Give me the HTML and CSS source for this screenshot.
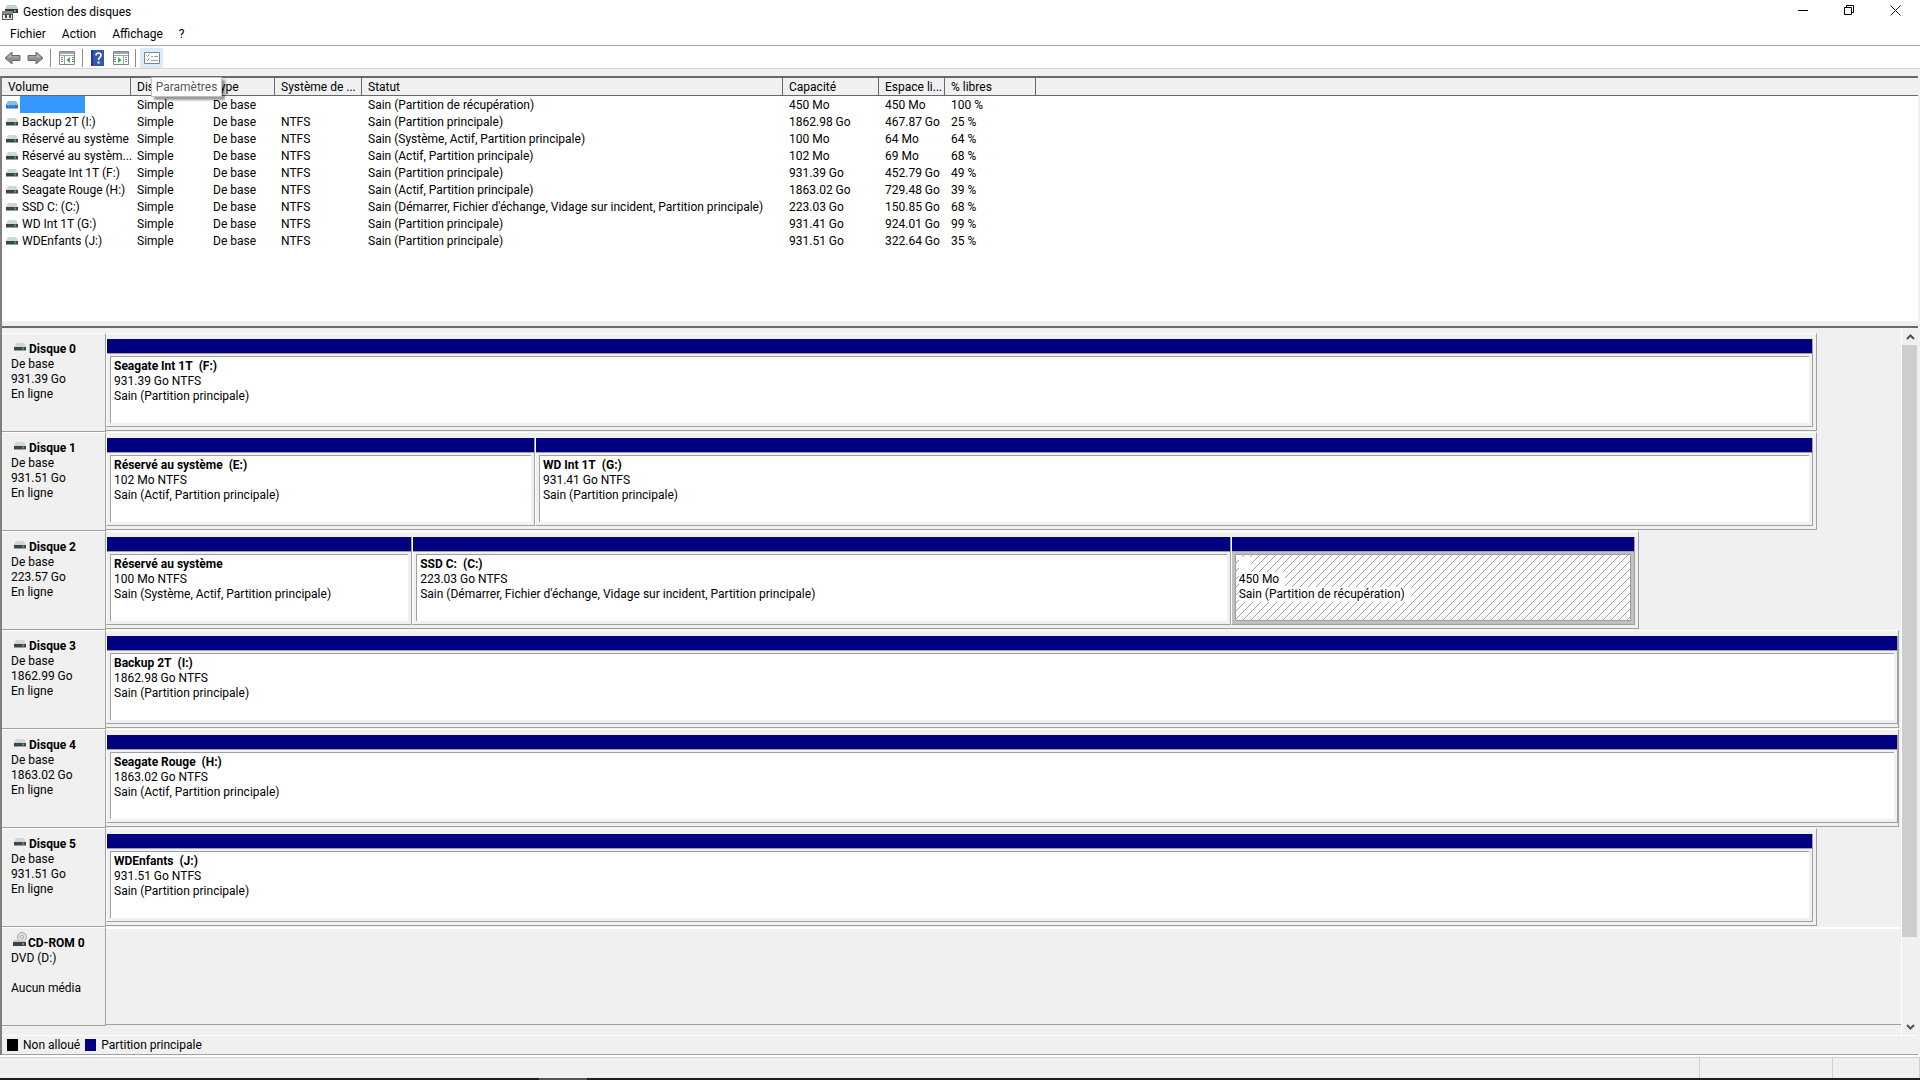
FILE: index.html
```html
<!DOCTYPE html>
<html lang="fr">
<head>
<meta charset="utf-8">
<title>Gestion des disques</title>
<meta name="viewport" content="width=device-width, initial-scale=1">
<link rel="stylesheet" href="styles.css">
</head>
<body>
<svg class="defs" aria-hidden="true">
  <symbol id="drive" viewBox="0 0 13 8" preserveAspectRatio="none">
    <path d="M2 0h9l2 4H0z" fill="#d3d6d9"/>
    <path d="M0 4h13v3H0z" fill="#3d4348"/>
    <path d="M0 7h13v1H0z" fill="#9da0a2"/>
    <path d="M9 4.500h2v2H9z" fill="#35c43a"/>
  </symbol>
  <symbol id="drive-selected" viewBox="0 0 13 8" preserveAspectRatio="none">
    <path d="M2 0h9l2 4H0z" fill="#82bdea"/>
    <path d="M0 4h13v3H0z" fill="#2d75b3"/>
    <path d="M0 7h13v1H0z" fill="#82bdea"/>
    <path d="M2 4h1v2H2zM5 4h1v2H5zM8 4h1v2H8z" fill="#62a5dc"/>
  </symbol>
  <symbol id="arrow-left" viewBox="0 0 17 14">
    <path d="M1 7l7-6v3.500h8v5H8V13z" fill="#8d8d8d" stroke="#6a6a6a"/>
    <path d="M3 6.500l4-3.500v2.500h8v1z" fill="#b4b4b4"/>
  </symbol>
</svg>

<div class="window">
  <header class="titlebar">
    <svg class="app-icon" viewBox="0 0 16 15" aria-hidden="true">
      <path d="M5 0h9l2 4H3z" fill="#c9cccf"/><path d="M3 4h13v4H3z" fill="#33383c"/><path d="M12 5h2v2h-2z" fill="#3ec645"/>
      <path d="M0 6h11v3H0z" fill="#85898c"/><path d="M0 9h11v6H0z" fill="#53575a"/><path d="M1 10h9v4H1z" fill="#e9eaeb"/><path d="M3 10h2v3H3zM7 10h2v3H7z" fill="#44484b"/>
    </svg>
    <h1 class="title">Gestion des disques</h1>
    <div class="window-buttons">
      <button class="window-button" type="button" aria-label="Réduire"><svg viewBox="0 0 11 11"><path d="M0 5.500h10" stroke="#000"/></svg></button>
      <button class="window-button" type="button" aria-label="Restaurer"><svg viewBox="0 0 11 11"><path d="M.5 2.500h7v7h-7zM2.500 2.500v-2h7v7h-2" fill="none" stroke="#000"/></svg></button>
      <button class="window-button" type="button" aria-label="Fermer"><svg viewBox="0 0 11 11"><path d="M.5.5l10 10M10.500.5l-10 10" stroke="#222"/></svg></button>
    </div>
  </header>

  <nav class="menubar">
    <button class="menu" type="button">Fichier</button>
    <button class="menu" type="button">Action</button>
    <button class="menu" type="button">Affichage</button>
    <button class="menu" type="button">?</button>
  </nav>

  <div class="toolbar">
    <button class="tool" type="button" aria-label="Précédent"><svg class="arrow" viewBox="0 0 17 14"><use href="#arrow-left"/></svg></button>
    <button class="tool" type="button" aria-label="Suivant"><svg class="arrow forward" viewBox="0 0 17 14"><use href="#arrow-left"/></svg></button>
    <span class="divider"></span>
    <button class="tool wide" type="button" aria-label="Arborescence"><svg class="panel" viewBox="0 0 16 14">
      <path d="M.5.5h15v13H.5z" fill="#fff" stroke="#7f868c"/><path d="M1 1h14v2H1z" fill="#9fa8b0"/><path d="M1 4.500h14M5.500 4v9" stroke="#9aa1a7"/>
      <path d="M2 6.500h2M2 8.500h2M2 10.500h2M13 6.500h2M13 8.500h2M13 10.500h2" stroke="#6d87a6"/><path d="M11 6v6L7.500 9z" fill="#3eae3f"/></svg></button>
    <span class="divider"></span>
    <button class="tool" type="button" aria-label="Aide"><svg class="help" viewBox="0 0 13 16">
      <path d="M0 0h13v16H0z" fill="#3553b8"/><path d="M0 0h2v16H0z" fill="#22398f"/><path d="M5 5.500C5 2 10 2.300 10 5.200 10 7.400 7.500 7.400 7.500 10" fill="none" stroke="#fff" stroke-width="1.600"/><path d="M6.600 11.500h2v2h-2z" fill="#fff"/></svg></button>
    <button class="tool" type="button" aria-label="Volet Actions"><svg class="panel" viewBox="0 0 16 14">
      <path d="M.5.5h15v13H.5z" fill="#fff" stroke="#7f868c"/><path d="M1 1h14v2H1z" fill="#9fa8b0"/><path d="M1 4.500h14M10.500 4v9" stroke="#9aa1a7"/>
      <path d="M12 6.500h2M12 8.500h2M12 10.500h2M1 6.500h2M1 8.500h2M1 10.500h2" stroke="#6d87a6"/><path d="M5 6v6l3.500-3z" fill="#3eae3f"/></svg></button>
    <span class="divider"></span>
    <button class="tool active" type="button" aria-label="Paramètres" aria-describedby="tip"><svg class="panel" viewBox="0 0 16 14">
      <path d="M.5 1.500h15v11H.5z" fill="#fff" stroke="#7f868c"/><path d="M2.500 4.500l1 1 2-2M2.500 8.500l1 1 2-2" fill="none" stroke="#4f8fce"/><path d="M7 5.500h2M10 5.500h4M7 9.500h7" stroke="#9aa1a7"/></svg></button>
    <span class="tooltip" id="tip" role="tooltip">Paramètres</span>
  </div>

  <main class="content">
    <section class="volumes">
      <table class="volume-table">
        <colgroup><col class="c-volume"><col class="c-layout"><col class="c-type"><col class="c-fs"><col class="c-status"><col class="c-capacity"><col class="c-free"><col class="c-percent"><col></colgroup>
        <thead><tr><th>Volume</th><th>Dis</th><th>Type</th><th>Système de ...</th><th>Statut</th><th>Capacité</th><th>Espace li...</th><th>% libres</th><th></th></tr></thead>
        <tbody>
          <tr class="selected"><td><span class="name"><svg class="drive"><use href="#drive-selected"/></svg><span class="label"></span></span></td><td>Simple</td><td>De base</td><td></td><td>Sain (Partition de récupération)</td><td>450 Mo</td><td>450 Mo</td><td>100 %</td><td></td></tr>
          <tr><td><span class="name"><svg class="drive"><use href="#drive"/></svg><span class="label">Backup 2T (I:)</span></span></td><td>Simple</td><td>De base</td><td>NTFS</td><td>Sain (Partition principale)</td><td>1862.98 Go</td><td>467.87 Go</td><td>25 %</td><td></td></tr>
          <tr><td><span class="name"><svg class="drive"><use href="#drive"/></svg><span class="label">Réservé au système</span></span></td><td>Simple</td><td>De base</td><td>NTFS</td><td>Sain (Système, Actif, Partition principale)</td><td>100 Mo</td><td>64 Mo</td><td>64 %</td><td></td></tr>
          <tr><td><span class="name"><svg class="drive"><use href="#drive"/></svg><span class="label">Réservé au systèm...</span></span></td><td>Simple</td><td>De base</td><td>NTFS</td><td>Sain (Actif, Partition principale)</td><td>102 Mo</td><td>69 Mo</td><td>68 %</td><td></td></tr>
          <tr><td><span class="name"><svg class="drive"><use href="#drive"/></svg><span class="label">Seagate Int 1T (F:)</span></span></td><td>Simple</td><td>De base</td><td>NTFS</td><td>Sain (Partition principale)</td><td>931.39 Go</td><td>452.79 Go</td><td>49 %</td><td></td></tr>
          <tr><td><span class="name"><svg class="drive"><use href="#drive"/></svg><span class="label">Seagate Rouge (H:)</span></span></td><td>Simple</td><td>De base</td><td>NTFS</td><td>Sain (Actif, Partition principale)</td><td>1863.02 Go</td><td>729.48 Go</td><td>39 %</td><td></td></tr>
          <tr><td><span class="name"><svg class="drive"><use href="#drive"/></svg><span class="label">SSD C: (C:)</span></span></td><td>Simple</td><td>De base</td><td>NTFS</td><td>Sain (Démarrer, Fichier d'échange, Vidage sur incident, Partition principale)</td><td>223.03 Go</td><td>150.85 Go</td><td>68 %</td><td></td></tr>
          <tr><td><span class="name"><svg class="drive"><use href="#drive"/></svg><span class="label">WD Int 1T (G:)</span></span></td><td>Simple</td><td>De base</td><td>NTFS</td><td>Sain (Partition principale)</td><td>931.41 Go</td><td>924.01 Go</td><td>99 %</td><td></td></tr>
          <tr><td><span class="name"><svg class="drive"><use href="#drive"/></svg><span class="label">WDEnfants (J:)</span></span></td><td>Simple</td><td>De base</td><td>NTFS</td><td>Sain (Partition principale)</td><td>931.51 Go</td><td>322.64 Go</td><td>35 %</td><td></td></tr>
        </tbody>
      </table>
    </section>

    <section class="disks">
      <div class="disk-list">
        <article class="disk">
          <div class="disk-info"><h2><svg class="drive"><use href="#drive"/></svg>Disque 0</h2><p>De base</p><p>931.39 Go</p><p>En ligne</p></div>
          <div class="lane"><div class="track" style="width:95.3%">
            <div class="partition"><div class="box"><h3>Seagate Int 1T&nbsp; (F:)</h3><p>931.39 Go NTFS</p><p>Sain (Partition principale)</p></div></div>
          </div></div>
        </article>
        <article class="disk">
          <div class="disk-info"><h2><svg class="drive"><use href="#drive"/></svg>Disque 1</h2><p>De base</p><p>931.51 Go</p><p>En ligne</p></div>
          <div class="lane"><div class="track" style="width:95.3%">
            <div class="partition" style="flex-grow:421"><div class="box"><h3>Réservé au système&nbsp; (E:)</h3><p>102 Mo NTFS</p><p>Sain (Actif, Partition principale)</p></div></div>
            <div class="partition" style="flex-grow:1270"><div class="box"><h3>WD Int 1T&nbsp; (G:)</h3><p>931.41 Go NTFS</p><p>Sain (Partition principale)</p></div></div>
          </div></div>
        </article>
        <article class="disk">
          <div class="disk-info"><h2><svg class="drive"><use href="#drive"/></svg>Disque 2</h2><p>De base</p><p>223.57 Go</p><p>En ligne</p></div>
          <div class="lane"><div class="track" style="width:85.4%">
            <div class="partition" style="flex-grow:298"><div class="box"><h3>Réservé au système</h3><p>100 Mo NTFS</p><p>Sain (Système, Actif, Partition principale)</p></div></div>
            <div class="partition" style="flex-grow:810"><div class="box"><h3>SSD C:&nbsp; (C:)</h3><p>223.03 Go NTFS</p><p>Sain (Démarrer, Fichier d'échange, Vidage sur incident, Partition principale)</p></div></div>
            <div class="partition chosen" style="flex-grow:396"><div class="box"><h3>&nbsp;&nbsp;</h3><p>450 Mo</p><p>Sain (Partition de récupération)</p></div></div>
          </div></div>
        </article>
        <article class="disk">
          <div class="disk-info"><h2><svg class="drive"><use href="#drive"/></svg>Disque 3</h2><p>De base</p><p>1862.99 Go</p><p>En ligne</p></div>
          <div class="lane"><div class="track full">
            <div class="partition"><div class="box"><h3>Backup 2T&nbsp; (I:)</h3><p>1862.98 Go NTFS</p><p>Sain (Partition principale)</p></div></div>
          </div></div>
        </article>
        <article class="disk">
          <div class="disk-info"><h2><svg class="drive"><use href="#drive"/></svg>Disque 4</h2><p>De base</p><p>1863.02 Go</p><p>En ligne</p></div>
          <div class="lane"><div class="track full">
            <div class="partition"><div class="box"><h3>Seagate Rouge&nbsp; (H:)</h3><p>1863.02 Go NTFS</p><p>Sain (Actif, Partition principale)</p></div></div>
          </div></div>
        </article>
        <article class="disk">
          <div class="disk-info"><h2><svg class="drive"><use href="#drive"/></svg>Disque 5</h2><p>De base</p><p>931.51 Go</p><p>En ligne</p></div>
          <div class="lane"><div class="track" style="width:95.3%">
            <div class="partition"><div class="box"><h3>WDEnfants&nbsp; (J:)</h3><p>931.51 Go NTFS</p><p>Sain (Partition principale)</p></div></div>
          </div></div>
        </article>
        <article class="disk">
          <div class="disk-info"><h2><svg class="cdrom" viewBox="0 0 14 15"><circle cx="9" cy="5" r="4.500" fill="#dfe2e4" stroke="#a2a7ab"/><circle cx="9" cy="5" r="1.500" fill="#fff" stroke="#a2a7ab"/><path d="M0 10l1-2h11l1 2z" fill="#c9cccf"/><path d="M0 10h13v4H0z" fill="#3d4348"/><path d="M9 11h2v2H9z" fill="#35c43a"/></svg>CD-ROM 0</h2><p>DVD (D:)</p><p>&nbsp;</p><p>Aucun média</p></div>
          <div class="lane empty"></div>
        </article>
      </div>
      <div class="scrollbar">
        <button class="scroll-button" type="button" aria-label="Défiler vers le haut"><svg viewBox="0 0 9 6"><path d="M1 5l3.500-3.500L8 5" fill="none" stroke="#505050" stroke-width="2"/></svg></button>
        <div class="scroll-track"><div class="thumb"></div></div>
        <button class="scroll-button" type="button" aria-label="Défiler vers le bas"><svg viewBox="0 0 9 6"><path d="M1 1l3.500 3.500L8 1" fill="none" stroke="#505050" stroke-width="2"/></svg></button>
      </div>
    </section>

    <div class="legend">
      <span class="key"><i class="swatch unallocated"></i>Non alloué</span>
      <span class="key"><i class="swatch primary"></i>Partition principale</span>
    </div>
  </main>

  <footer class="statusbar"><span class="status-main"></span><span class="status-mid"></span><span class="status-end"></span></footer>
</div>
</body>
</html>
```
FILE: styles.css
```css
* {
  box-sizing: border-box;
}

body {
  margin: 0;
  background: #f0f0f0;
  color: #000;
  font: 12px/15px Roboto, "Open Sans", sans-serif;
}

h1, h2, h3, p {
  margin: 0;
  font-size: inherit;
}

button {
  padding: 0;
  border: 0;
  background: none;
  color: inherit;
  font: inherit;
}

svg {
  display: block;
}

.defs {
  position: absolute;
  width: 0;
  height: 0;
}

.window {
  display: flex;
  flex-direction: column;
  min-height: 100vh;
}

.window::after {
  height: 2px;
  background: linear-gradient(90deg, #1e1e1e 539px, #555 539px, #555 587px, #1e1e1e 587px);
  content: "";
}

/* Title, menus and tools */
.titlebar {
  display: flex;
  align-items: center;
  height: 23px;
  padding: 1px 0 0 2px;
  background: #fff;
}

.app-icon {
  width: 16px;
  height: 15px;
}

.title {
  margin-left: 5px;
  font-weight: 400;
}

.window-buttons {
  display: flex;
  align-self: flex-start;
  margin-left: auto;
  padding-right: 2px;
}

.window-button {
  display: grid;
  place-items: center;
  width: 46px;
  height: 18px;
}

.window-button svg {
  width: 11px;
  height: 11px;
}

.menubar {
  display: flex;
  gap: 16px;
  height: 23px;
  padding: 0 10px;
  border-bottom: 1px solid #a8a8a8;
  background: #fff;
}

.toolbar {
  position: relative;
  display: flex;
  align-items: center;
  height: 23px;
  padding: 2px 0 0 1px;
  border-bottom: 1px solid #d4d4d4;
  background: #fff;
}

.tool {
  display: grid;
  place-items: center;
  width: 23px;
  height: 20px;
}

.tool.wide {
  margin: 0 1px;
}

.tool.active {
  margin-left: 1px;
  background: #d9ecf8;
}

.arrow {
  width: 17px;
  height: 14px;
}

.forward {
  transform: scaleX(-1);
}

.panel {
  width: 16px;
  height: 14px;
}

.help {
  width: 13px;
  height: 16px;
}

.divider {
  width: 1px;
  height: 18px;
  margin: 0 3px;
  background: #8c8c8c;
}

.tooltip {
  position: absolute;
  top: 31px;
  left: 151px;
  z-index: 2;
  width: 71px;
  padding: 2px 0 1px;
  border: 1px solid #c0c0c0;
  background: #fff;
  box-shadow: 3px 3px 2px rgba(0, 0, 0, .4);
  color: #575757;
  text-align: center;
}

/* Volume list */
.content {
  display: flex;
  flex: 1;
  flex-direction: column;
  margin: 7px 2px 0 0;
  border-left: 2px solid #808080;
  border-top: 2px solid #696969;
}

.volumes {
  min-height: 250px;
  border-bottom: 2px solid #696969;
  background: linear-gradient(#f0f0f0, #f0f0f0) bottom / 100% 5px no-repeat #fff;
}

.volume-table {
  width: 100%;
  border-collapse: separate;
  border-spacing: 0;
  table-layout: fixed;
}

.c-volume { width: 129px; }
.c-layout { width: 76px; }
.c-type { width: 68px; }
.c-fs { width: 87px; }
.c-status { width: 421px; }
.c-capacity { width: 96px; }
.c-free { width: 66px; }
.c-percent { width: 91px; }

.volume-table th {
  height: 18px;
  padding: 2px 0 0 6px;
  border-right: 1px solid #696969;
  border-bottom: 1px solid #696969;
  background: #f0f0f0;
  font-weight: 400;
  text-align: left;
  white-space: nowrap;
}

.volume-table th:last-child {
  border-right: 0;
}

.volume-table td {
  height: 17px;
  padding: 2px 0 0 6px;
  white-space: nowrap;
}

.volume-table td:first-child {
  padding: 0 0 0 4px;
}

.name {
  display: flex;
  align-items: center;
  height: 17px;
}

.drive {
  flex: none;
  width: 12px;
  height: 8px;
}

.name .label {
  padding: 2px 0 0 4px;
}

.selected .label {
  width: 65px;
  height: 17px;
  margin-left: 2px;
  background: #3399ff;
}

/* Disk map */
.disks {
  display: flex;
  flex: 1;
}

.disk-list {
  flex: 1;
  min-width: 0;
  padding-top: 5px;
}

.disk {
  display: flex;
  height: 99px;
}

.disk-info {
  width: 104px;
  padding: 8px 0 0 9px;
  border-top: 1px solid #fff;
  border-right: 1px solid #a0a0a0;
  border-bottom: 1px solid #a0a0a0;
}

.disk-info h2 {
  display: flex;
  align-items: flex-end;
  height: 15px;
}

.disk-info .drive {
  margin: 0 3px 6px 3px;
}

.cdrom {
  width: 14px;
  height: 15px;
  margin: 0 1px 4px 2px;
}

.lane {
  flex: 1;
  min-width: 0;
  padding-bottom: 1px;
}

.track {
  display: flex;
  height: 100%;
  padding: 5px 3px 3px 0;
  border-top: 1px solid #fff;
  border-right: 1px solid #a0a0a0;
  border-bottom: 1px solid #a0a0a0;
}

.track.full {
  margin-right: 2px;
  padding-right: 0;
}

.lane.empty {
  margin-bottom: 1px;
  border-top: 2px solid #fff;
  border-bottom: 1px solid #a0a0a0;
}

.partition {
  display: flex;
  flex: 1 1 0;
  flex-direction: column;
  min-width: 0;
  padding: 0 3px 3px;
  border-right: 1px solid #a0a0a0;
  border-bottom: 1px solid #a0a0a0;
  border-left: 1px solid #fff;
}

.partition::before {
  height: 14px;
  margin: 0 -3px 2px;
  border-bottom: 1px solid #a0a0a0;
  background: #000080;
  content: "";
}

.box {
  flex: 1;
  padding: 2px 3px;
  border-top: 1px solid #a0a0a0;
  border-left: 1px solid #a0a0a0;
  background: #fff;
  white-space: nowrap;
}

.chosen {
  background: #c0c0c0;
}

.chosen .box {
  border: 1px solid #a0a0a0;
  background: linear-gradient(135deg, #fff 45%, #a0a0a0 45%, #a0a0a0 55%, #fff 55%) 0 0 / 8px 8px;
}

.chosen h3,
.chosen p {
  width: fit-content;
  padding-right: 6px;
  background: #fff;
}

.scrollbar {
  display: flex;
  flex-direction: column;
  width: 17px;
  border-left: 1px solid #fff;
}

.scroll-button {
  display: grid;
  place-items: center;
  height: 17px;
}

.scroll-button svg {
  width: 9px;
  height: 6px;
}

.scroll-track {
  flex: 1;
}

.thumb {
  width: 15px;
  height: 88%;
  background: #cdcdcd;
}

.legend {
  display: flex;
  gap: 5px;
  height: 20px;
  padding-left: 5px;
  border-top: 1px solid #fff;
  border-bottom: 1px solid #a0a0a0;
}

.key {
  display: flex;
  align-items: center;
  gap: 5px;
}

.swatch {
  width: 11px;
  height: 12px;
}

.unallocated {
  background: #000;
}

.primary {
  background: #000080;
}

.statusbar {
  display: flex;
  height: 23px;
  border-top: 2px solid #fff;
}

.statusbar span {
  border-top: 1px solid #d0d0d0;
  border-right: 1px solid #d0d0d0;
}

.status-main {
  flex: 1;
}

.status-mid {
  width: 133px;
}

.status-end {
  width: 87px;
}
```
